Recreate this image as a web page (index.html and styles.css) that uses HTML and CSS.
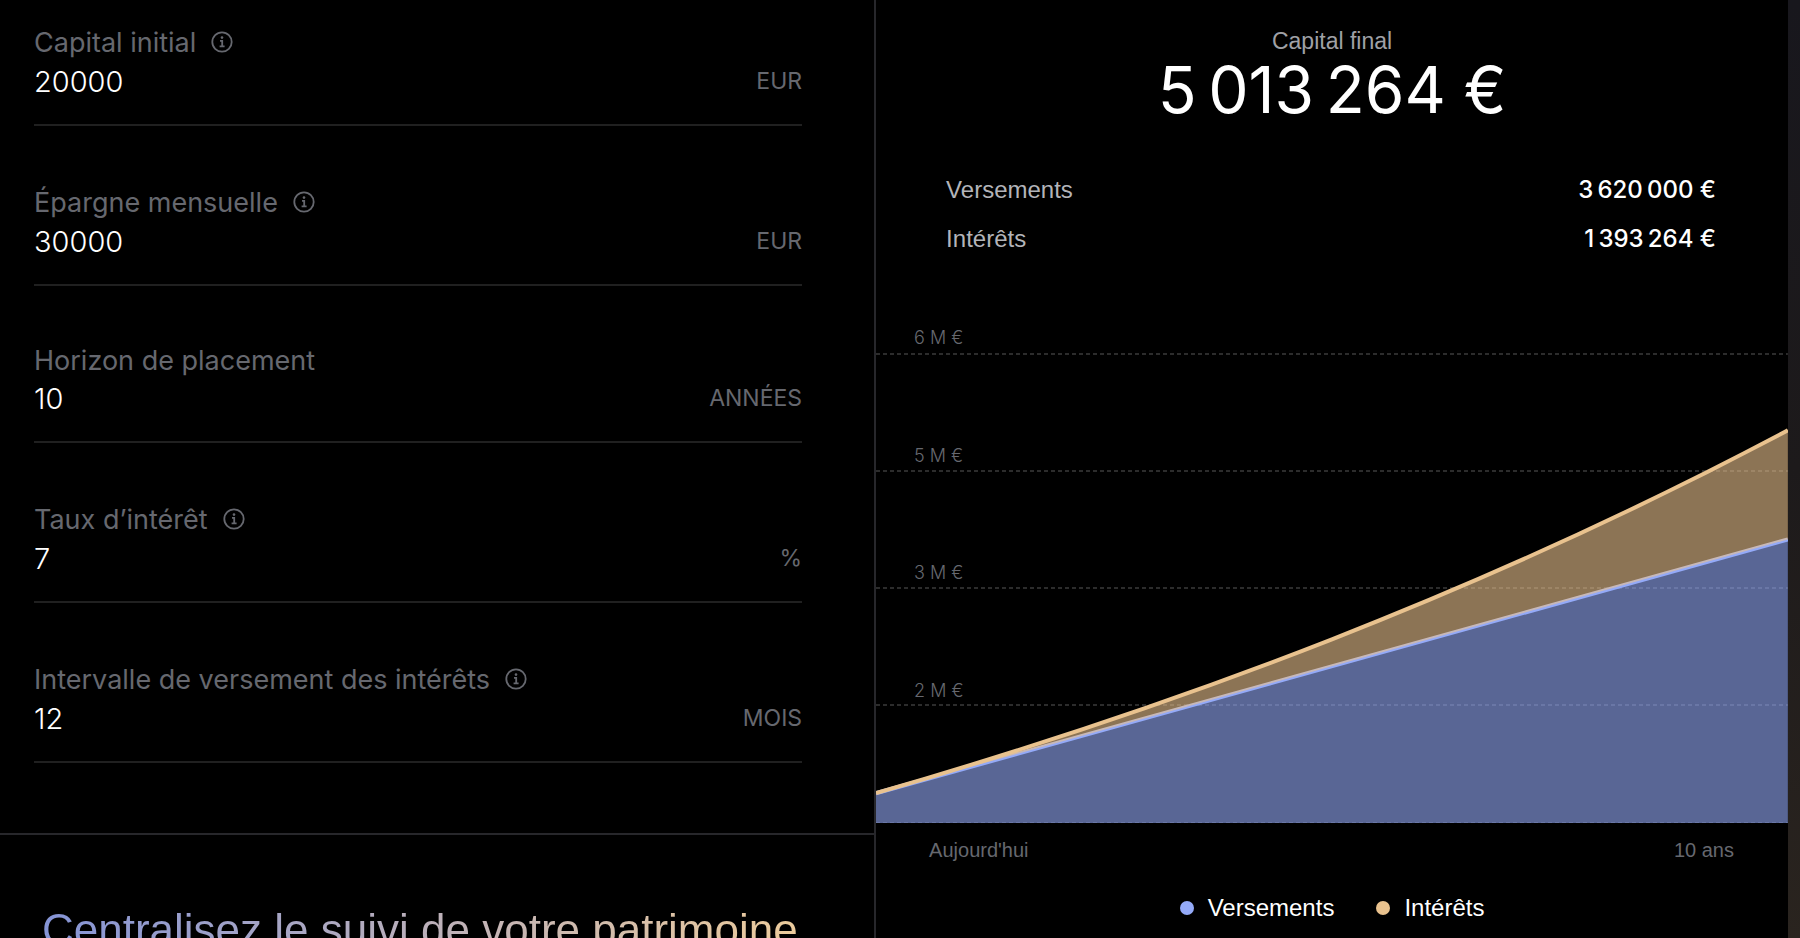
FILE: index.html
```html
<!DOCTYPE html>
<html lang="fr">
<head>
  <meta charset="UTF-8" />
  <meta name="viewport" content="width=device-width, initial-scale=1" />
  <title>Calculateur d'intérêts composés</title>
  <link rel="stylesheet" href="styles.css">
</head>
<body>

<!-- Shared icon -->
<svg class="sprite" aria-hidden="true">
  <symbol id="icon-info" viewBox="0 0 22 22">
    <circle cx="11" cy="11" r="9.7" fill="none" stroke="currentColor" stroke-width="1.8"/>
    <circle cx="11" cy="6.6" r="1.3" fill="currentColor"/>
    <path d="M9 9.8h2.2v5.2M8.6 15.3h5" fill="none" stroke="currentColor" stroke-width="1.8"/>
  </symbol>
</svg>

<div class="simulator">
  <!-- Inputs -->
  <div class="left">
    <form class="form">
      <div class="field">
        <div class="field-head">
          <label for="capital">Capital initial</label>
          <button type="button" class="info" aria-label="Aide"><svg><use href="#icon-info"/></svg></button>
        </div>
        <div class="field-row">
          <input type="text" id="capital" value="20000">
          <span class="unit">EUR</span>
        </div>
      </div>

      <div class="field">
        <div class="field-head">
          <label for="monthly">Épargne mensuelle</label>
          <button type="button" class="info" aria-label="Aide"><svg><use href="#icon-info"/></svg></button>
        </div>
        <div class="field-row">
          <input type="text" id="monthly" value="30000">
          <span class="unit">EUR</span>
        </div>
      </div>

      <div class="field">
        <div class="field-head plain">
          <label for="years">Horizon de placement</label>
        </div>
        <div class="field-row">
          <input type="text" id="years" value="10">
          <span class="unit">ANNÉES</span>
        </div>
      </div>

      <div class="field">
        <div class="field-head">
          <label for="rate">Taux d’intérêt</label>
          <button type="button" class="info" aria-label="Aide"><svg><use href="#icon-info"/></svg></button>
        </div>
        <div class="field-row">
          <input type="text" id="rate" value="7">
          <span class="unit">%</span>
        </div>
      </div>

      <div class="field">
        <div class="field-head">
          <label for="interval">Intervalle de versement des intérêts</label>
          <button type="button" class="info" aria-label="Aide"><svg><use href="#icon-info"/></svg></button>
        </div>
        <div class="field-row">
          <input type="text" id="interval" value="12">
          <span class="unit">MOIS</span>
        </div>
      </div>
    </form>

    <div class="promo">
      <h2>Centralisez le suivi de votre patrimoine</h2>
    </div>
  </div>

  <!-- Result -->
  <div class="right">
    <div class="total">
      <p class="total-label">Capital final</p>
      <p class="total-value">5&#8239;013&#8239;264 €</p>
    </div>

    <dl class="summary">
      <div>
        <dt>Versements</dt>
        <dd>3&#8239;620&#8239;000 €</dd>
      </div>
      <div>
        <dt>Intérêts</dt>
        <dd>1&#8239;393&#8239;264 €</dd>
      </div>
    </dl>

    <div class="chart">
      <svg class="plot" viewBox="0 0 900 470" preserveAspectRatio="none" aria-hidden="true">
        <path class="grid" d="M0 1H900M0 118H900M0 235H900M0 352H900M0 470H900"/>
        <path class="area-paid" d="M0 440.2L900 186.4V470H0Z"/>
        <path class="line-paid" d="M0 440.2L900 186.4"/>
        <path class="area-interest" d="M0 440.2C300 352.2 600 238.7 900 77.3V186.4Z"/>
        <path class="line-interest" d="M0 440.2C300 352.2 600 238.7 900 77.3"/>
      </svg>
      <span class="tick tick-1">6 M €</span>
      <span class="tick tick-2">5 M €</span>
      <span class="tick tick-3">3 M €</span>
      <span class="tick tick-4">2 M €</span>
    </div>

    <div class="axis">
      <span>Aujourd'hui</span>
      <span>10 ans</span>
    </div>

    <ul class="legend">
      <li><i class="dot dot-paid"></i>Versements</li>
      <li><i class="dot dot-interest"></i>Intérêts</li>
    </ul>
  </div>
</div>

</body>
</html>
```
FILE: styles.css
```css
* {
  box-sizing: border-box;
}
body {
  margin: 0;
  padding-right: 12px;
  height: 100vh;
  overflow: hidden;
  font-family: 'Liberation Sans', Arial, sans-serif;
  background: linear-gradient(#18171d, #1d1a1b 50%, #2a241f);
  color: #fff;
}
p, h2, dl, dd, ul {
  margin: 0;
  padding: 0;
}
.sprite {
  position: absolute;
  width: 0;
  height: 0;
}
.simulator {
  display: grid;
  grid-template-columns: 49fr 51fr;
  min-height: 100vh;
  background: #000;
}

/* Inputs */
.left {
  border-right: 2px solid #27272b;
  min-width: 0;
}
.form {
  padding: 25px 72px 70px 34px;
  font-family: Inter, sans-serif;
  border-bottom: 2px solid #27272b;
}
.field {
  border-bottom: 2px solid #202020;
  padding-bottom: 21px;
}
.field + .field {
  margin-top: 59px;
}
.field-head {
  display: flex;
  align-items: center;
  gap: 15px;
  height: 34px;
  font-size: 27px;
  color: #66686f;
}
.field-head.plain {
  height: 31px;
}
.info {
  width: 22px;
  height: 22px;
  padding: 0;
  border: none;
  background: none;
  color: inherit;
  cursor: pointer;
}
.info svg {
  display: block;
  width: 22px;
  height: 22px;
}
.field-row {
  display: flex;
  align-items: center;
  height: 44px;
}
.field-row input {
  flex: 1;
  min-width: 0;
  padding: 0;
  border: none;
  outline: none;
  background: none;
  color: #fff;
  font-family: inherit;
  font-size: 29px;
  font-weight: 300;
}
.unit {
  font-size: 23px;
  color: #66686f;
}
.promo {
  padding: 70px 42px 40px;
}
.promo h2 {
  display: inline-block;
  font-size: 44px;
  line-height: 50px;
  font-weight: 400;
  white-space: nowrap;
  background: linear-gradient(90deg, #8594d6, #c5b5b5 60%, #eccb9c);
  -webkit-background-clip: text;
  background-clip: text;
  color: transparent;
}

/* Result */
.right {
  min-width: 0;
  padding-top: 25px;
}
.total {
  text-align: center;
}
.total-label {
  font-size: 23px;
  line-height: 32px;
  color: #9fa0a6;
}
.total-value {
  font-family: Inter, sans-serif;
  font-size: 64px;
  line-height: 66px;
}
.summary {
  padding: 42px 72px 0 70px;
}
.summary div {
  display: flex;
  justify-content: space-between;
  align-items: center;
  height: 49px;
}
.summary dt {
  font-size: 24px;
  color: #b3b4b9;
}
.summary dd {
  font-family: Inter, sans-serif;
  font-size: 24px;
  font-weight: 500;
}
.chart {
  display: grid;
  grid-template-rows: 30px repeat(4, 1fr);
  height: 500px;
  margin-top: 60px;
}
.plot {
  grid-area: 2 / 1 / 6 / 2;
  width: 100%;
  height: 470px;
}
.plot path {
  vector-effect: non-scaling-stroke;
}
.grid {
  stroke: #2c2c2c;
  stroke-width: 2;
  stroke-dasharray: 4 3;
}
.area-paid {
  fill: #94aaf8;
  fill-opacity: 0.6;
}
.area-interest {
  fill: #e9c28e;
  fill-opacity: 0.6;
}
.line-paid, .line-interest {
  fill: none;
  stroke: #94aaf8;
  stroke-width: 4;
}
.line-interest {
  stroke: #e9c28e;
}
.tick {
  align-self: end;
  padding: 0 0 5px 38px;
  font-family: Inter, sans-serif;
  font-size: 18px;
  line-height: 20px;
  font-weight: 300;
  color: #66686f;
}
.tick-1 { grid-area: 1 / 1; }
.tick-2 { grid-area: 2 / 1; }
.tick-3 { grid-area: 3 / 1; }
.tick-4 { grid-area: 4 / 1; }
.axis {
  display: flex;
  justify-content: space-between;
  padding: 15px 54px 0 53px;
  font-size: 20px;
  line-height: 24px;
  color: #66686f;
}
.legend {
  display: flex;
  justify-content: center;
  gap: 42px;
  padding: 32px 0 0;
  list-style: none;
  font-size: 24px;
  line-height: 28px;
}
.legend li {
  display: flex;
  align-items: center;
  gap: 14px;
}
.dot {
  width: 14px;
  height: 14px;
  border-radius: 50%;
}
.dot-paid {
  background: #94aaf8;
}
.dot-interest {
  background: #e9c28e;
}
```
